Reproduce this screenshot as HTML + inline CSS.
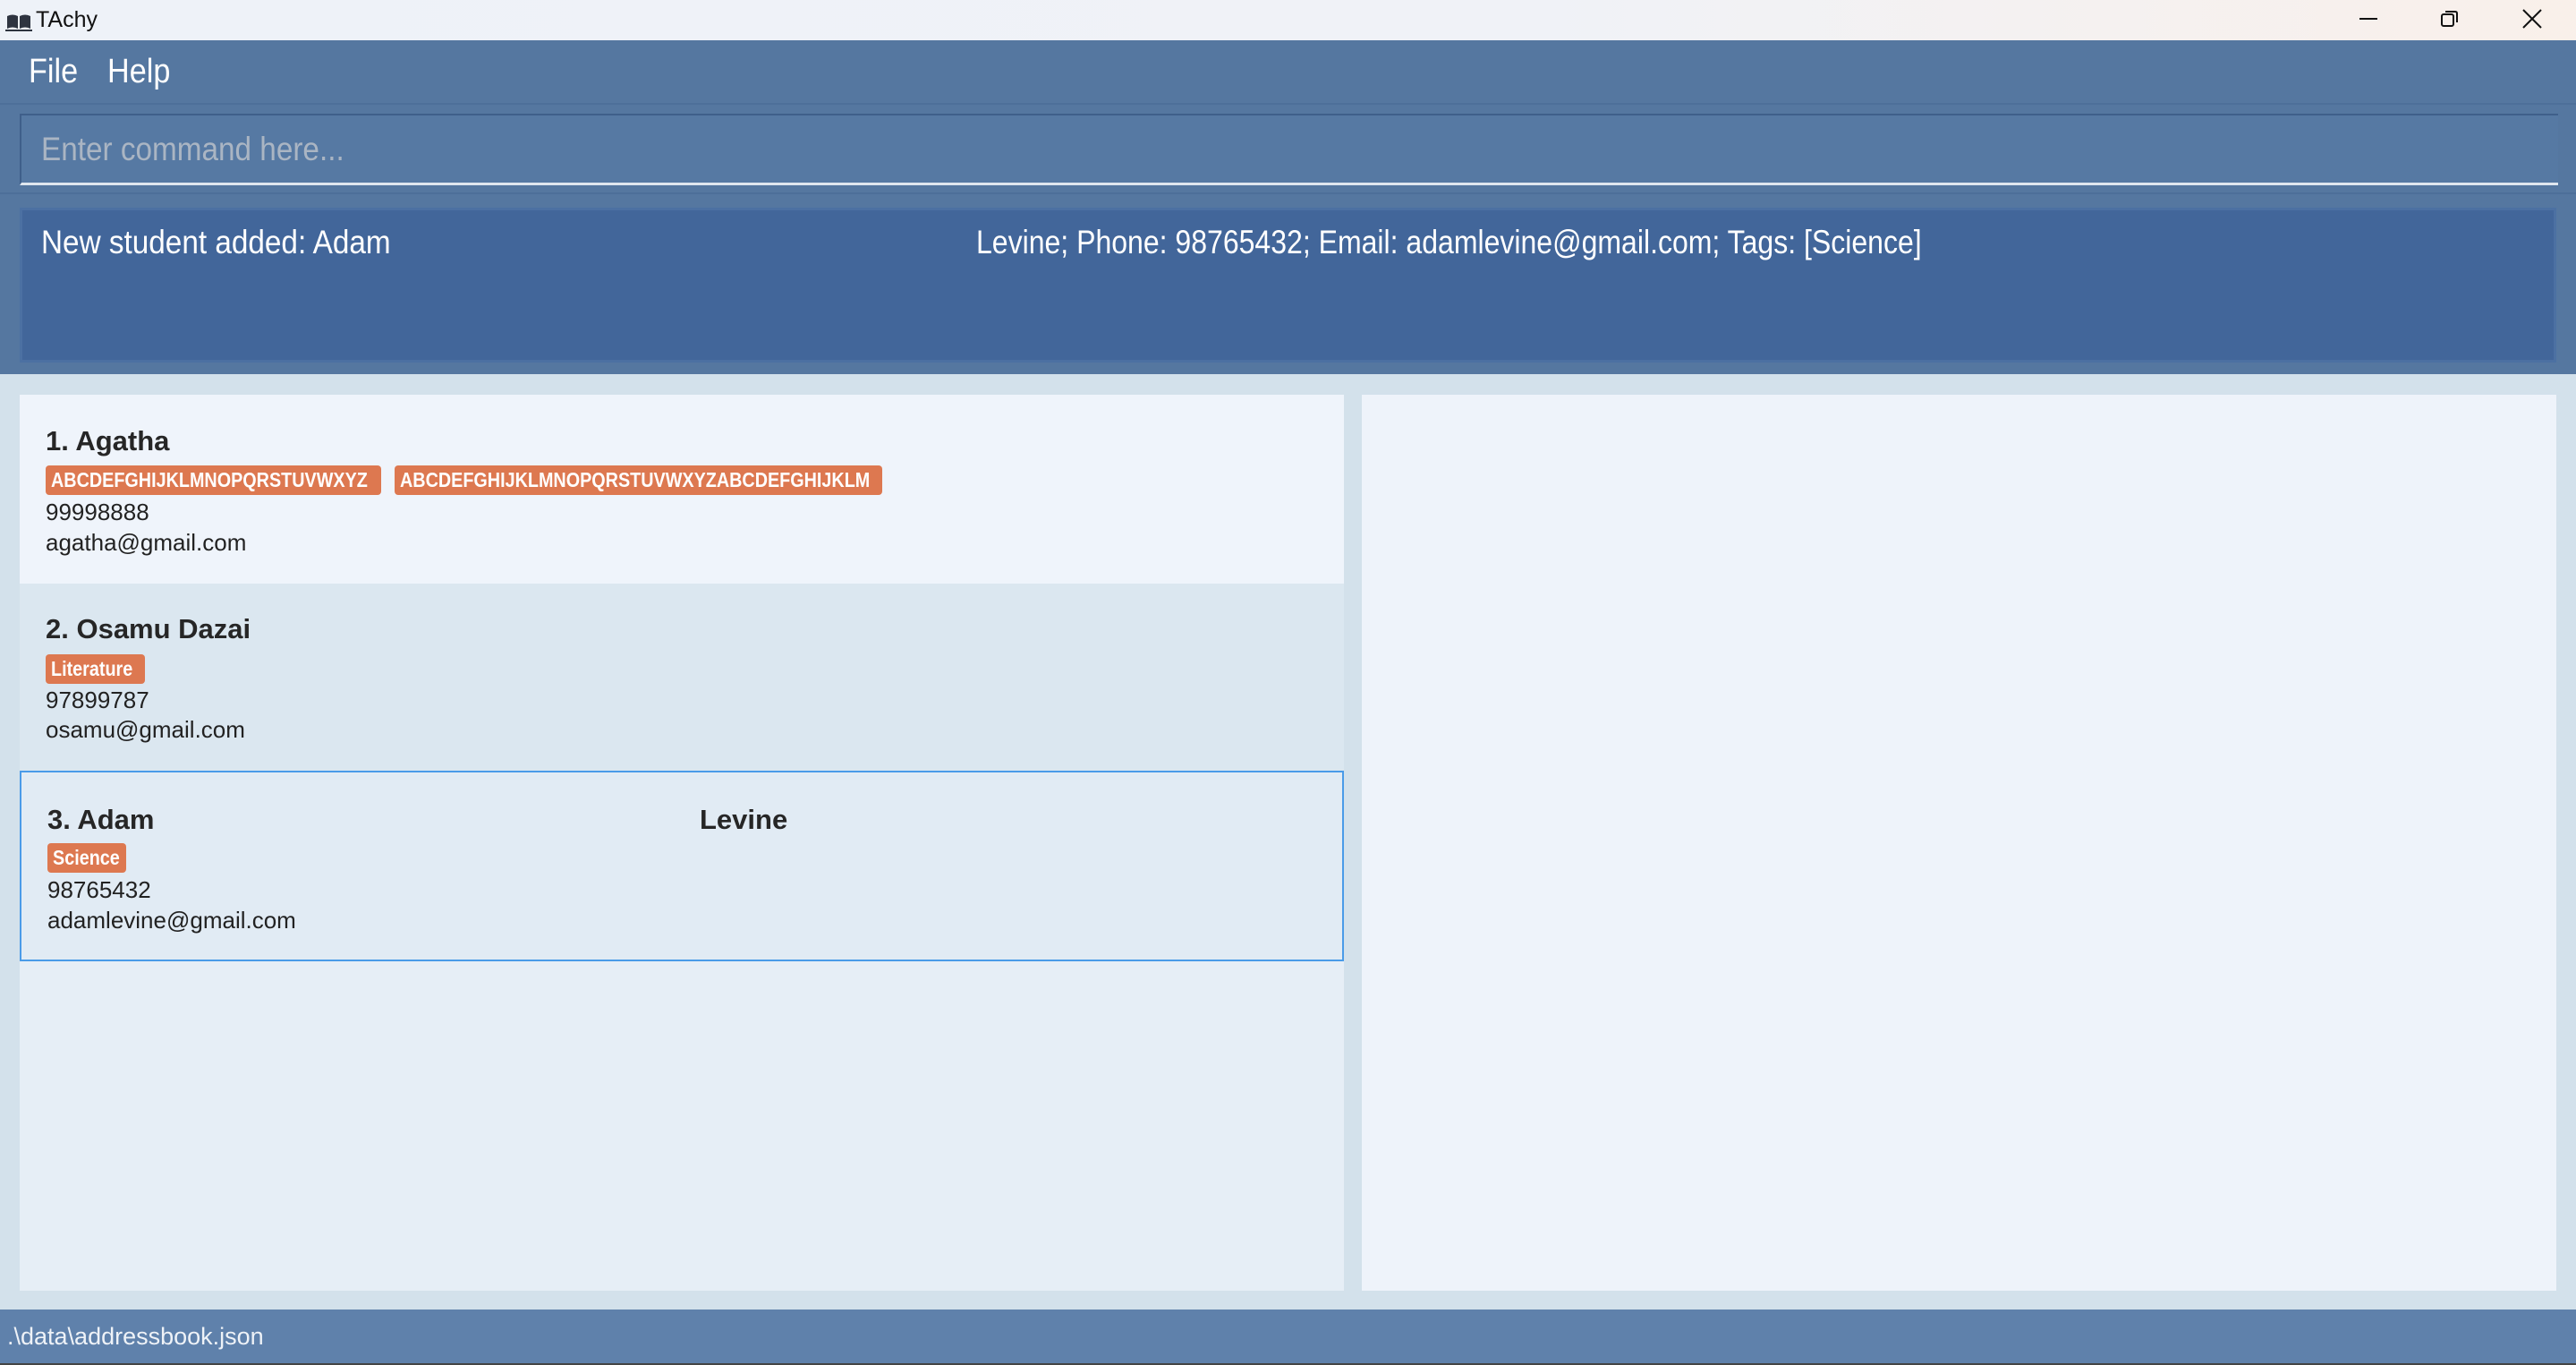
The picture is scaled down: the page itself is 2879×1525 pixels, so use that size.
<!DOCTYPE html>
<html><head><meta charset="utf-8"><style>
*{margin:0;padding:0;box-sizing:border-box}
body{width:2879px;height:1525px;position:relative;overflow:hidden;font-family:"Liberation Sans",sans-serif;background:#d3e1eb}
.a{position:absolute}
.t{white-space:nowrap}
.sx{transform:scaleX(0.9);transform-origin:0 0}
.tag{position:absolute;height:33px;background:#dd7850;border-radius:4px;overflow:hidden}
.tag span{position:absolute;left:6px;top:0;color:#fff;font-size:23px;font-weight:bold;line-height:33px;white-space:nowrap;transform:scaleX(0.86);transform-origin:0 0}
.nm{position:absolute;font-size:31px;font-weight:bold;color:#262626;white-space:nowrap}
.ln{position:absolute;font-size:26px;color:#222;white-space:nowrap}
</style></head><body>
<div class="a" style="left:0;top:0;width:2879px;height:45px;background:linear-gradient(90deg,#eef2f8 0%,#f0f2f7 60%,#f9f0ea 100%)"></div>
<svg class="a" style="left:6px;top:12px" width="30" height="24" viewBox="0 0 30 24"><path d="M2 20 L2 6 Q8 3 14 6 L14 20 Q8 17 2 20Z M16 6 Q22 3 28 6 L28 20 Q22 17 16 20Z" fill="#2e3440"/><path d="M0 22 L15 22 L30 22" stroke="#2e3440" stroke-width="2"/></svg>
<div class="a t" style="left:40px;top:8px;font-size:25px;color:#111">TAchy</div>
<div class="a" style="left:2637px;top:20px;width:20px;height:2px;background:#111"></div>
<svg class="a" style="left:2727px;top:10px" width="22" height="22" viewBox="0 0 22 22"><rect x="2" y="6" width="13" height="13" rx="2" fill="none" stroke="#111" stroke-width="2"/><path d="M6 3 H17 Q19 3 19 5 V15" fill="none" stroke="#111" stroke-width="2"/></svg>
<svg class="a" style="left:2819px;top:10px" width="22" height="22" viewBox="0 0 22 22"><path d="M1 1 L21 21 M21 1 L1 21" stroke="#111" stroke-width="2"/></svg>
<div class="a" style="left:0;top:45px;width:2879px;height:70px;background:#5577a0"></div>
<div class="a t sx" style="left:32px;top:59px;font-size:38px;color:#fff">File</div>
<div class="a t sx" style="left:120px;top:59px;font-size:38px;color:#fff">Help</div>
<div class="a" style="left:0;top:115px;width:2879px;height:102px;background:#5577a0;border-top:2px solid #4d6f99;border-bottom:2px solid #4d6f99"></div>
<div class="a" style="left:22px;top:127px;width:2837px;height:80px;background:#5679a3;border-top:2px solid #3f5f8a;border-left:2px solid #3f5f8a;border-bottom:3px solid #dfe6ee"></div>
<div class="a t sx" style="left:46px;top:146px;font-size:37px;color:#aab5c3">Enter command here...</div>
<div class="a" style="left:0;top:217px;width:2879px;height:201px;background:#5577a0"></div>
<div class="a" style="left:22px;top:232px;width:2835px;height:173px;background:#42669a;border:3px solid #4c70a2"></div>
<div class="a t sx" style="left:46px;top:250px;font-size:37px;color:#fff">New student added: Adam</div>
<div class="a t" style="left:1091px;top:250px;font-size:37px;color:#fff;transform:scaleX(0.865);transform-origin:0 0">Levine; Phone: 98765432; Email: adamlevine@gmail.com; Tags: [Science]</div>
<div class="a" style="left:22px;top:441px;width:1480px;height:1001px;background:#e6eef6"></div>
<div class="a" style="left:1522px;top:441px;width:1335px;height:1001px;background:#eef3fa"></div>
<div class="a" style="left:22px;top:441px;width:1480px;height:211px;background:#eff4fb"></div>
<div class="nm" style="left:51px;top:475px">1. Agatha</div>
<div class="tag" style="left:51px;top:520px;width:375px"><span>ABCDEFGHIJKLMNOPQRSTUVWXYZ</span></div>
<div class="tag" style="left:441px;top:520px;width:545px"><span>ABCDEFGHIJKLMNOPQRSTUVWXYZABCDEFGHIJKLM</span></div>
<div class="ln" style="left:51px;top:557px">99998888</div>
<div class="ln" style="left:51px;top:591px">agatha@gmail.com</div>
<div class="a" style="left:22px;top:652px;width:1480px;height:209px;background:#dbe7f0"></div>
<div class="nm" style="left:51px;top:685px">2. Osamu Dazai</div>
<div class="tag" style="left:51px;top:731px;width:111px"><span>Literature</span></div>
<div class="ln" style="left:51px;top:767px">97899787</div>
<div class="ln" style="left:51px;top:800px">osamu@gmail.com</div>
<div class="a" style="left:22px;top:861px;width:1480px;height:213px;background:#e1ebf4;border:2px solid #4a9be8"></div>
<div class="nm" style="left:53px;top:898px">3. Adam</div>
<div class="nm" style="left:782px;top:898px">Levine</div>
<div class="tag" style="left:53px;top:942px;width:88px"><span>Science</span></div>
<div class="ln" style="left:53px;top:979px">98765432</div>
<div class="ln" style="left:53px;top:1013px">adamlevine@gmail.com</div>
<div class="a" style="left:0;top:1463px;width:2879px;height:62px;background:#5f81ab;border-bottom:2px solid #444"></div>
<div class="a t" style="left:8px;top:1478px;font-size:27px;color:#eef2f7">.\data\addressbook.json</div>
</body></html>
